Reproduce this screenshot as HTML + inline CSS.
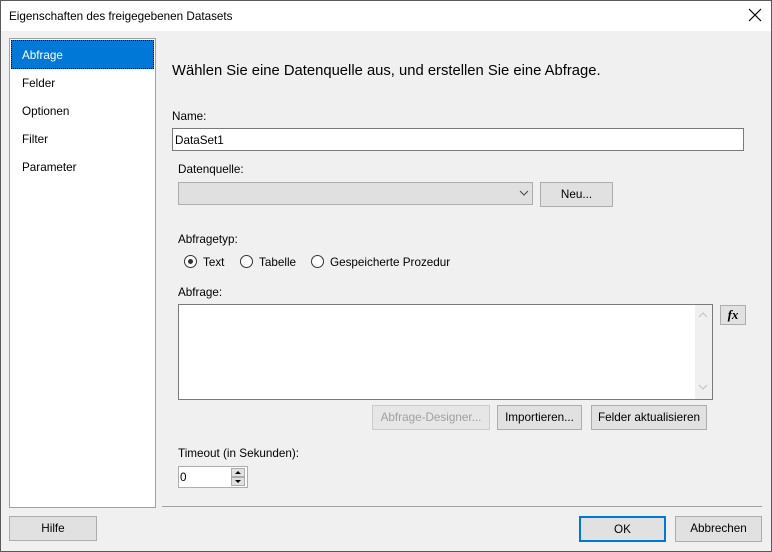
<!DOCTYPE html>
<html><head><style>
*{margin:0;padding:0;box-sizing:border-box}
body{width:772px;height:552px;overflow:hidden;font-family:"Liberation Sans",sans-serif;font-size:11.7px;color:#000;background:#f0f0f0}
.win{position:absolute;left:0;top:0;width:772px;height:552px;background:#f0f0f0}
.frame{position:absolute;left:0;top:0;width:772px;height:552px;border:1px solid #5a5a5a;pointer-events:none}
.a{position:absolute}
.title{left:0;top:0;width:772px;height:31px;background:#fff}
.btn{position:absolute;background:#e1e1e1;border:1px solid #adadad;text-align:center;line-height:24px;font-size:11.7px}
.lbl{position:absolute;font-size:11.7px;margin-top:2px}
.nav{position:absolute;left:22px;font-size:11.7px;margin-top:2px}
.radio{position:absolute;width:13px;height:13px;border:1px solid #333;border-radius:50%;background:#fff}
</style></head><body><div class="win">
<div class="a title"></div>
<div class="lbl" style="left:9px;top:8px">Eigenschaften des freigegebenen Datasets</div>
<svg class="a" style="left:748px;top:8px" width="14" height="14"><path d="M1 1L13 13M13 1L1 13" stroke="#000" stroke-width="1.2"/></svg>

<div class="a" style="left:9px;top:38px;width:147px;height:470px;background:#fff;border:1px solid #a0a0a0"></div>
<div class="a" style="left:11px;top:40px;width:143px;height:29px;background:#0078d7;border:1px dotted #000"></div>
<div class="nav" style="top:47px;color:#fff">Abfrage</div>
<div class="nav" style="top:75px">Felder</div>
<div class="nav" style="top:103px">Optionen</div>
<div class="nav" style="top:131px">Filter</div>
<div class="nav" style="top:159px">Parameter</div>

<div class="lbl" style="left:172px;top:61px;font-size:14.8px">Wählen Sie eine Datenquelle aus, und erstellen Sie eine Abfrage.</div>
<div class="lbl" style="left:172px;top:108px">Name:</div>
<div class="a" style="left:172px;top:128px;width:572px;height:23px;background:#fff;border:1px solid #7a7a7a"></div>
<div class="lbl" style="left:175px;top:132px">DataSet1</div>
<div class="lbl" style="left:178px;top:161px">Datenquelle:</div>
<div class="a" style="left:178px;top:182px;width:355px;height:23px;background:#e0e0e0;border:1px solid #adadad"></div>
<svg class="a" style="left:519px;top:189px" width="10" height="8"><path d="M1 2L5 6L9 2" stroke="#444" fill="none"/></svg>
<div class="btn" style="left:540px;top:182px;width:73px;height:25px">Neu...</div>

<div class="lbl" style="left:178px;top:231px">Abfragetyp:</div>
<div class="radio" style="left:184px;top:255px"></div><div class="a" style="left:188px;top:259px;width:5px;height:5px;border-radius:50%;background:#333"></div>
<div class="lbl" style="left:203px;top:254px">Text</div>
<div class="radio" style="left:240px;top:255px"></div>
<div class="lbl" style="left:259px;top:254px">Tabelle</div>
<div class="radio" style="left:311px;top:255px"></div>
<div class="lbl" style="left:330px;top:254px">Gespeicherte Prozedur</div>

<div class="lbl" style="left:178px;top:284px">Abfrage:</div>
<div class="a" style="left:178px;top:304px;width:535px;height:96px;background:#fff;border:1px solid #7a7a7a"></div>
<div class="a" style="left:695px;top:305px;width:17px;height:94px;background:#f0f0f0"></div>
<svg class="a" style="left:698px;top:311px" width="10" height="80"><path d="M1 6L5 2L9 6" stroke="#c0c0c0" fill="none"/><path d="M1 74L5 78L9 74" stroke="#c0c0c0" fill="none"/></svg>
<div class="btn" style="left:720px;top:305px;width:26px;height:20px;line-height:18px;font-family:'Liberation Serif',serif;font-style:italic;font-weight:bold;font-size:13px">fx</div>

<div class="btn" style="left:372px;top:405px;width:118px;height:25px;color:#a0a0a0;background:#e6e6e6;border-color:#cccccc">Abfrage-Designer...</div>
<div class="btn" style="left:497px;top:405px;width:85px;height:25px">Importieren...</div>
<div class="btn" style="left:591px;top:405px;width:116px;height:25px">Felder aktualisieren</div>

<div class="lbl" style="left:178px;top:445px">Timeout (in Sekunden):</div>
<div class="a" style="left:178px;top:466px;width:70px;height:22px;background:#fff;border:1px solid #adadad"></div>
<div class="lbl" style="left:180px;top:469px">0</div>
<div class="a" style="left:231px;top:468px;width:14px;height:9px;background:#e1e1e1;border:1px solid #adadad"></div>
<div class="a" style="left:231px;top:477px;width:14px;height:9px;background:#e1e1e1;border:1px solid #adadad"></div>
<svg class="a" style="left:234px;top:470px" width="8" height="14"><path d="M1 4L4 1L7 4Z M1 10L4 13L7 10Z" fill="#000"/></svg>

<div class="a" style="left:162px;top:506px;width:600px;height:1px;background:#a0a0a0"></div>
<div class="btn" style="left:9px;top:516px;width:88px;height:25px">Hilfe</div>
<div class="btn" style="left:579px;top:516px;width:87px;height:26px;border:2px solid #0078d7;line-height:23px">OK</div>
<div class="btn" style="left:675px;top:516px;width:87px;height:26px">Abbrechen</div>
</div><div class="frame"></div></body></html>
